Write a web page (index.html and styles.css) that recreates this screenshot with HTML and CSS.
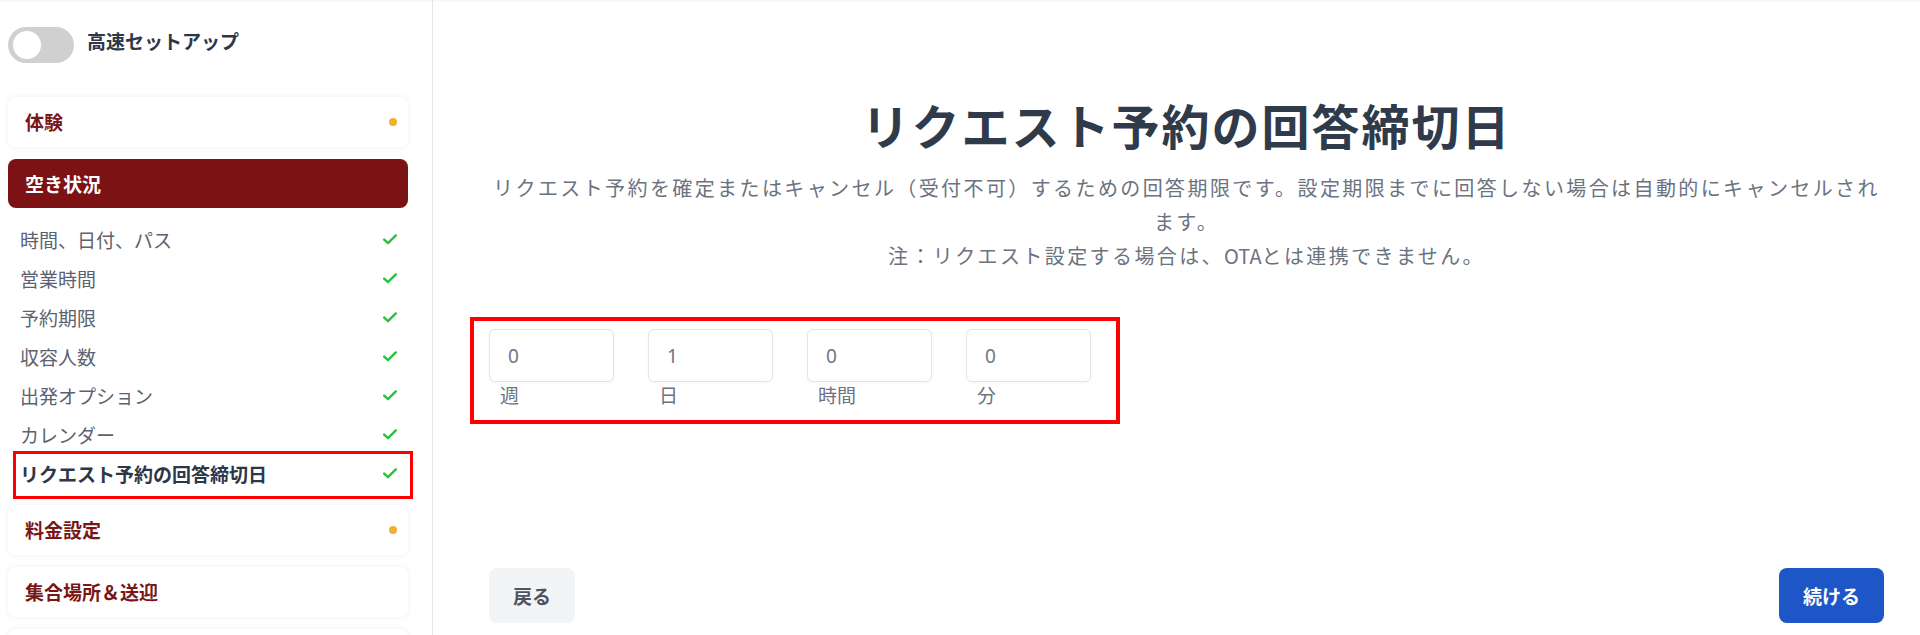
FILE: index.html
```html
<!DOCTYPE html>
<html lang="ja">
<head>
<meta charset="utf-8">
<title>リクエスト予約の回答締切日</title>
<link rel="stylesheet" href="styles.css">
</head>
<body>
<div class="app">
  <aside class="sidebar">
    <div class="quick">
      <span class="toggle"><span class="knob"></span></span>
      <span class="quick-label">高速セットアップ</span>
    </div>
    <nav class="steps">
      <div class="card"><span class="card-title">体験</span><span class="dot"></span></div>
      <div class="card active"><span class="card-title">空き状況</span></div>
      <ul class="subs">
        <li class="sub"><span>時間、日付、パス</span><svg class="check" viewBox="0 0 14 11"><path d="M1.2 5.6 L5 9.2 L12.8 1.4"/></svg></li>
        <li class="sub"><span>営業時間</span><svg class="check" viewBox="0 0 14 11"><path d="M1.2 5.6 L5 9.2 L12.8 1.4"/></svg></li>
        <li class="sub"><span>予約期限</span><svg class="check" viewBox="0 0 14 11"><path d="M1.2 5.6 L5 9.2 L12.8 1.4"/></svg></li>
        <li class="sub"><span>収容人数</span><svg class="check" viewBox="0 0 14 11"><path d="M1.2 5.6 L5 9.2 L12.8 1.4"/></svg></li>
        <li class="sub"><span>出発オプション</span><svg class="check" viewBox="0 0 14 11"><path d="M1.2 5.6 L5 9.2 L12.8 1.4"/></svg></li>
        <li class="sub"><span>カレンダー</span><svg class="check" viewBox="0 0 14 11"><path d="M1.2 5.6 L5 9.2 L12.8 1.4"/></svg></li>
        <li class="sub current"><span>リクエスト予約の回答締切日</span><svg class="check" viewBox="0 0 14 11"><path d="M1.2 5.6 L5 9.2 L12.8 1.4"/></svg></li>
      </ul>
      <div class="card"><span class="card-title">料金設定</span><span class="dot"></span></div>
      <div class="card"><span class="card-title">集合場所＆送迎</span></div>
      <div class="card"><span class="card-title"></span></div>
    </nav>
  </aside>
  <main class="main">
    <div class="content">
      <h1 class="title">リクエスト予約の回答締切日</h1>
      <p class="desc">リクエスト予約を確定またはキャンセル（受付不可）するための回答期限です。設定期限までに回答しない場合は自動的にキャンセルされます。<br>注：リクエスト設定する場合は、<span class="latin">OTA</span>とは連携できません。</p>
      <div class="fields-wrap">
        <div class="fields">
          <label class="field"><input class="num" type="text" value="0"><span class="unit">週</span></label>
          <label class="field"><input class="num" type="text" value="1"><span class="unit">日</span></label>
          <label class="field"><input class="num" type="text" value="0"><span class="unit">時間</span></label>
          <label class="field"><input class="num" type="text" value="0"><span class="unit">分</span></label>
        </div>
      </div>
      <div class="actions">
        <button class="btn back" type="button">戻る</button>
        <button class="btn next" type="button">続ける</button>
      </div>
    </div>
  </main>
</div>
</body>
</html>
```

FILE: styles.css
```css
* { box-sizing: border-box; }

html, body {
  margin: 0;
  padding: 0;
  background: #ffffff;
}

body {
  font-family: "Noto Sans CJK JP", "Noto Sans", sans-serif;
  color: #2f3b4b;
  height: 635px;
  overflow: hidden;
}

.app {
  display: flex;
  height: 635px;
  box-shadow: inset 0 3px 3px -2px rgba(0, 0, 0, 0.05);
}

/* ---------- Sidebar ---------- */
.sidebar {
  width: 433px;
  flex: none;
  border-right: 1px solid #e4e4e4;
  padding: 27px 24px 0 8px;
  overflow: hidden;
}

.quick {
  display: flex;
  align-items: center;
  height: 36px;
  gap: 13px;
}

.toggle {
  width: 66px;
  height: 36px;
  border-radius: 18px;
  background: #d0d0d0;
  display: flex;
  align-items: center;
  padding-left: 5px;
  flex: none;
}

.knob {
  width: 28px;
  height: 28px;
  border-radius: 50%;
  background: #ffffff;
}

.quick-label {
  font-size: 19px;
  font-weight: 700;
  color: #2d3748;
  line-height: 26px;
  padding-bottom: 8px;
}

.steps {
  margin-top: 34px;
  display: flex;
  flex-direction: column;
}

.card {
  height: 50px;
  border-radius: 8px;
  background: #ffffff;
  box-shadow: 0 0 6px rgba(0, 0, 0, 0.07);
  display: flex;
  align-items: center;
  justify-content: space-between;
  padding: 0 11px 0 17px;
  margin-bottom: 12px;
}

.card-title {
  font-size: 19px;
  font-weight: 700;
  color: #7a1616;
  line-height: 26px;
}

.card.active {
  height: 49px;
  background: #7c1214;
  box-shadow: none;
}

.card.active .card-title {
  color: #ffffff;
}

.dot {
  width: 8px;
  height: 8px;
  border-radius: 50%;
  background: #efb230;
}

.subs {
  list-style: none;
  margin: 0 -5px 12px 5px;
  padding: 0;
}

.sub {
  position: relative;
  height: 39px;
  display: flex;
  align-items: center;
  justify-content: space-between;
  padding: 0 16px 0 7px;
  font-size: 19px;
  color: #5b6270;
}

.sub.current {
  font-weight: 700;
  color: #2d3748;
}

.sub.current::after {
  content: "";
  position: absolute;
  left: 0;
  right: 0;
  top: -3px;
  bottom: -6px;
  border: 3px solid #ff0000;
  pointer-events: none;
}

.check {
  width: 14px;
  height: 11px;
  fill: none;
  stroke: #2cc040;
  stroke-width: 2.4;
  stroke-linecap: round;
  stroke-linejoin: round;
}

/* ---------- Main ---------- */
.main {
  flex: 1;
  padding: 95px 36px 0 56px;
}

.content {
  width: 1395px;
  display: flex;
  flex-direction: column;
  align-items: flex-start;
}

.title {
  align-self: stretch;
  margin: 0;
  text-align: center;
  font-size: 48px;
  line-height: 58px;
  letter-spacing: 2px;
  font-weight: 700;
  color: #2f3b4b;
}

.desc {
  align-self: stretch;
  margin: 18px 0 0;
  text-align: center;
  font-size: 20px;
  letter-spacing: 2.4px;
  line-height: 34px;
  color: #6b7380;
}

.latin {
  letter-spacing: 0;
}

.fields-wrap {
  margin: 44px 0 0 -19px;
  border: 4px solid #ff0000;
  padding: 8px 25px 12px 15px;
}

.fields {
  display: flex;
  gap: 34px;
}

.field {
  display: flex;
  flex-direction: column;
  width: 125px;
}

.num {
  width: 125px;
  height: 53px;
  border: 1px solid #e2e4e8;
  border-radius: 6px;
  box-shadow: 0 1px 4px rgba(0, 0, 0, 0.04);
  padding: 0 0 0 18px;
  font-family: "Noto Sans", "Noto Sans CJK JP", sans-serif;
  font-size: 19px;
  color: #707783;
  background: #ffffff;
  outline: none;
}

.unit {
  padding-left: 11px;
  font-size: 19px;
  line-height: 26px;
  color: #6b7380;
}

.actions {
  align-self: stretch;
  margin-top: 144px;
  display: flex;
  justify-content: space-between;
}

.btn {
  height: 55px;
  padding: 0 24px;
  border: none;
  border-radius: 8px;
  font-family: "Noto Sans CJK JP", sans-serif;
  font-size: 19px;
  font-weight: 700;
  cursor: pointer;
}

.btn.back {
  background: #f3f4f5;
  color: #4b5563;
}

.btn.next {
  background: #1e56c8;
  color: #ffffff;
}
```
